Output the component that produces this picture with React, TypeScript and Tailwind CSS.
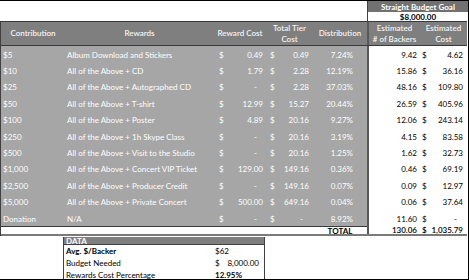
const rows = [
  ["$5", "Album Download and Stickers", "0.49", "0.49", "7.24%", "9.42", "4.62"],
  ["$10", "All of the Above + CD", "1.79", "2.28", "12.19%", "15.86", "36.16"],
  ["$25", "All of the Above + Autographed CD", "-", "2.28", "37.03%", "48.16", "109.80"],
  ["$50", "All of the Above + T-shirt", "12.99", "15.27", "20.44%", "26.59", "405.96"],
  ["$100", "All of the Above + Poster", "4.89", "20.16", "9.27%", "12.06", "243.14"],
  ["$250", "All of the Above + 1h Skype Class", "-", "20.16", "3.19%", "4.15", "83.58"],
  ["$500", "All of the Above + Visit to the Studio", "-", "20.16", "1.25%", "1.62", "32.73"],
  ["$1,000", "All of the Above + Concert VIP Ticket", "129.00", "149.16", "0.36%", "0.46", "69.19"],
  ["$2,500", "All of the Above + Producer Credit", "-", "149.16", "0.07%", "0.09", "12.97"],
  ["$5,000", "All of the Above + Private Concert", "500.00", "649.16", "0.04%", "0.06", "37.64"],
  ["Donation", "N/A", "-", "-", "8.92%", "11.60", "-"],
];

function Money({ v, className }: { v: string; className: string }) {
  return (
    <div className={"flex justify-between " + className}>
      <span>$</span>
      <span className={v === "-" ? "pr-[6px]" : ""}>{v}</span>
    </div>
  );
}

export default function App() {
  return (
    <div
      className="w-[469px] h-[280px] bg-white border-t border-r border-b border-black overflow-hidden text-[8px] leading-none"
      style={{ fontFamily: "Lato, 'Open Sans', sans-serif" }}
    >
      {/* goal box */}
      <div className="flex h-[20px]">
        <div className="flex-1" />
        <div className="w-[101px] flex flex-col border-l border-[#404040]">
          <div className="h-[11px] bg-[#717171] text-white font-bold flex items-center justify-center">
            Straight Budget Goal
          </div>
          <div className="flex-1 bg-white text-black font-bold flex items-center justify-center">
            $8,000.00
          </div>
        </div>
      </div>

      {/* table */}
      <div className="w-[467px] border-l border-[#404040]">
        <div className="flex h-[25px] bg-[#7f7f7f] text-[#f4f4f4] font-semibold border-t border-b border-[#3a3a3a] text-center leading-[11px]">
          <div className="w-[64px] flex items-center justify-center">Contribution</div>
          <div className="w-[149px] flex items-center justify-center">Rewards</div>
          <div className="w-[52px] flex items-center justify-center">Reward Cost</div>
          <div className="w-[47px] flex items-center justify-center">Total Tier<br />Cost</div>
          <div className="w-[54px] flex items-center justify-center">Distribution</div>
          <div className="w-[53px] flex items-center justify-center border-l-2 border-[#595959]">Estimated<br /># of Backers</div>
          <div className="flex-1 flex items-center justify-center">Estimated<br />Cost</div>
        </div>

        {rows.map((r) => (
          <div key={r[0]} className="flex h-[16.4px] items-center">
            <div className="flex h-full items-center bg-[#a6a6a6] text-white pt-[1px]">
              <div className="w-[64px] pl-[2px]">{r[0]}</div>
              <div className="w-[149px] pl-[2px] whitespace-nowrap">{r[1]}</div>
              <Money v={r[2]} className="w-[52px] pl-[5px] pr-[3px]" />
              <Money v={r[3]} className="w-[47px] pl-[4px] pr-[4px]" />
              <div className="w-[54px] text-right pr-[14px]">{r[4]}</div>
            </div>
            <div className="flex h-full items-center bg-white text-black border-l-2 border-[#595959] pt-[1px]">
              <div className="w-[51px] text-right pr-[3px]">{r[5]}</div>
              <Money v={r[6]} className="w-[48px] pl-[2px] pr-[5px]" />
            </div>
          </div>
        ))}

        <div className="flex h-[10px] items-center border-b-2 border-[#7a7a7a] text-black">
          <div className="w-[366px] h-full flex items-center border-t border-[#3a3a3a]">
            <div className="w-[312px]" />
            <div className="w-[54px] text-center font-bold">TOTAL</div>
          </div>
          <div className="flex h-full items-center border-l-2 border-[#595959] font-semibold">
            <div className="w-[51px] text-right pr-[3px]">130.06</div>
            <Money v="1,035.79" className="w-[48px] pl-[2px] pr-[5px]" />
          </div>
        </div>
      </div>

      {/* data box */}
      <div className="ml-[63px] mt-[1px] w-[202px] border-l border-r border-[#404040] text-black">
        <div className="h-[8px] bg-[#7f7f7f] text-white font-bold pl-[2px] flex items-center border-b border-[#404040]">
          DATA
        </div>
        <div className="flex h-[12px] items-center">
          <div className="w-[151px] pl-[2px] font-bold">Avg. $/Backer</div>
          <div>$62</div>
        </div>
        <div className="flex h-[12px] items-center">
          <div className="w-[151px] pl-[2px]">Budget Needed</div>
          <div className="w-[44px] flex justify-between">
            <span>$</span>
            <span>8,000.00</span>
          </div>
        </div>
        <div className="flex h-[12px] items-center">
          <div className="w-[151px] pl-[2px]">Rewards Cost Percentage</div>
          <div className="font-bold">12.95%</div>
        </div>
      </div>
    </div>
  );
}
